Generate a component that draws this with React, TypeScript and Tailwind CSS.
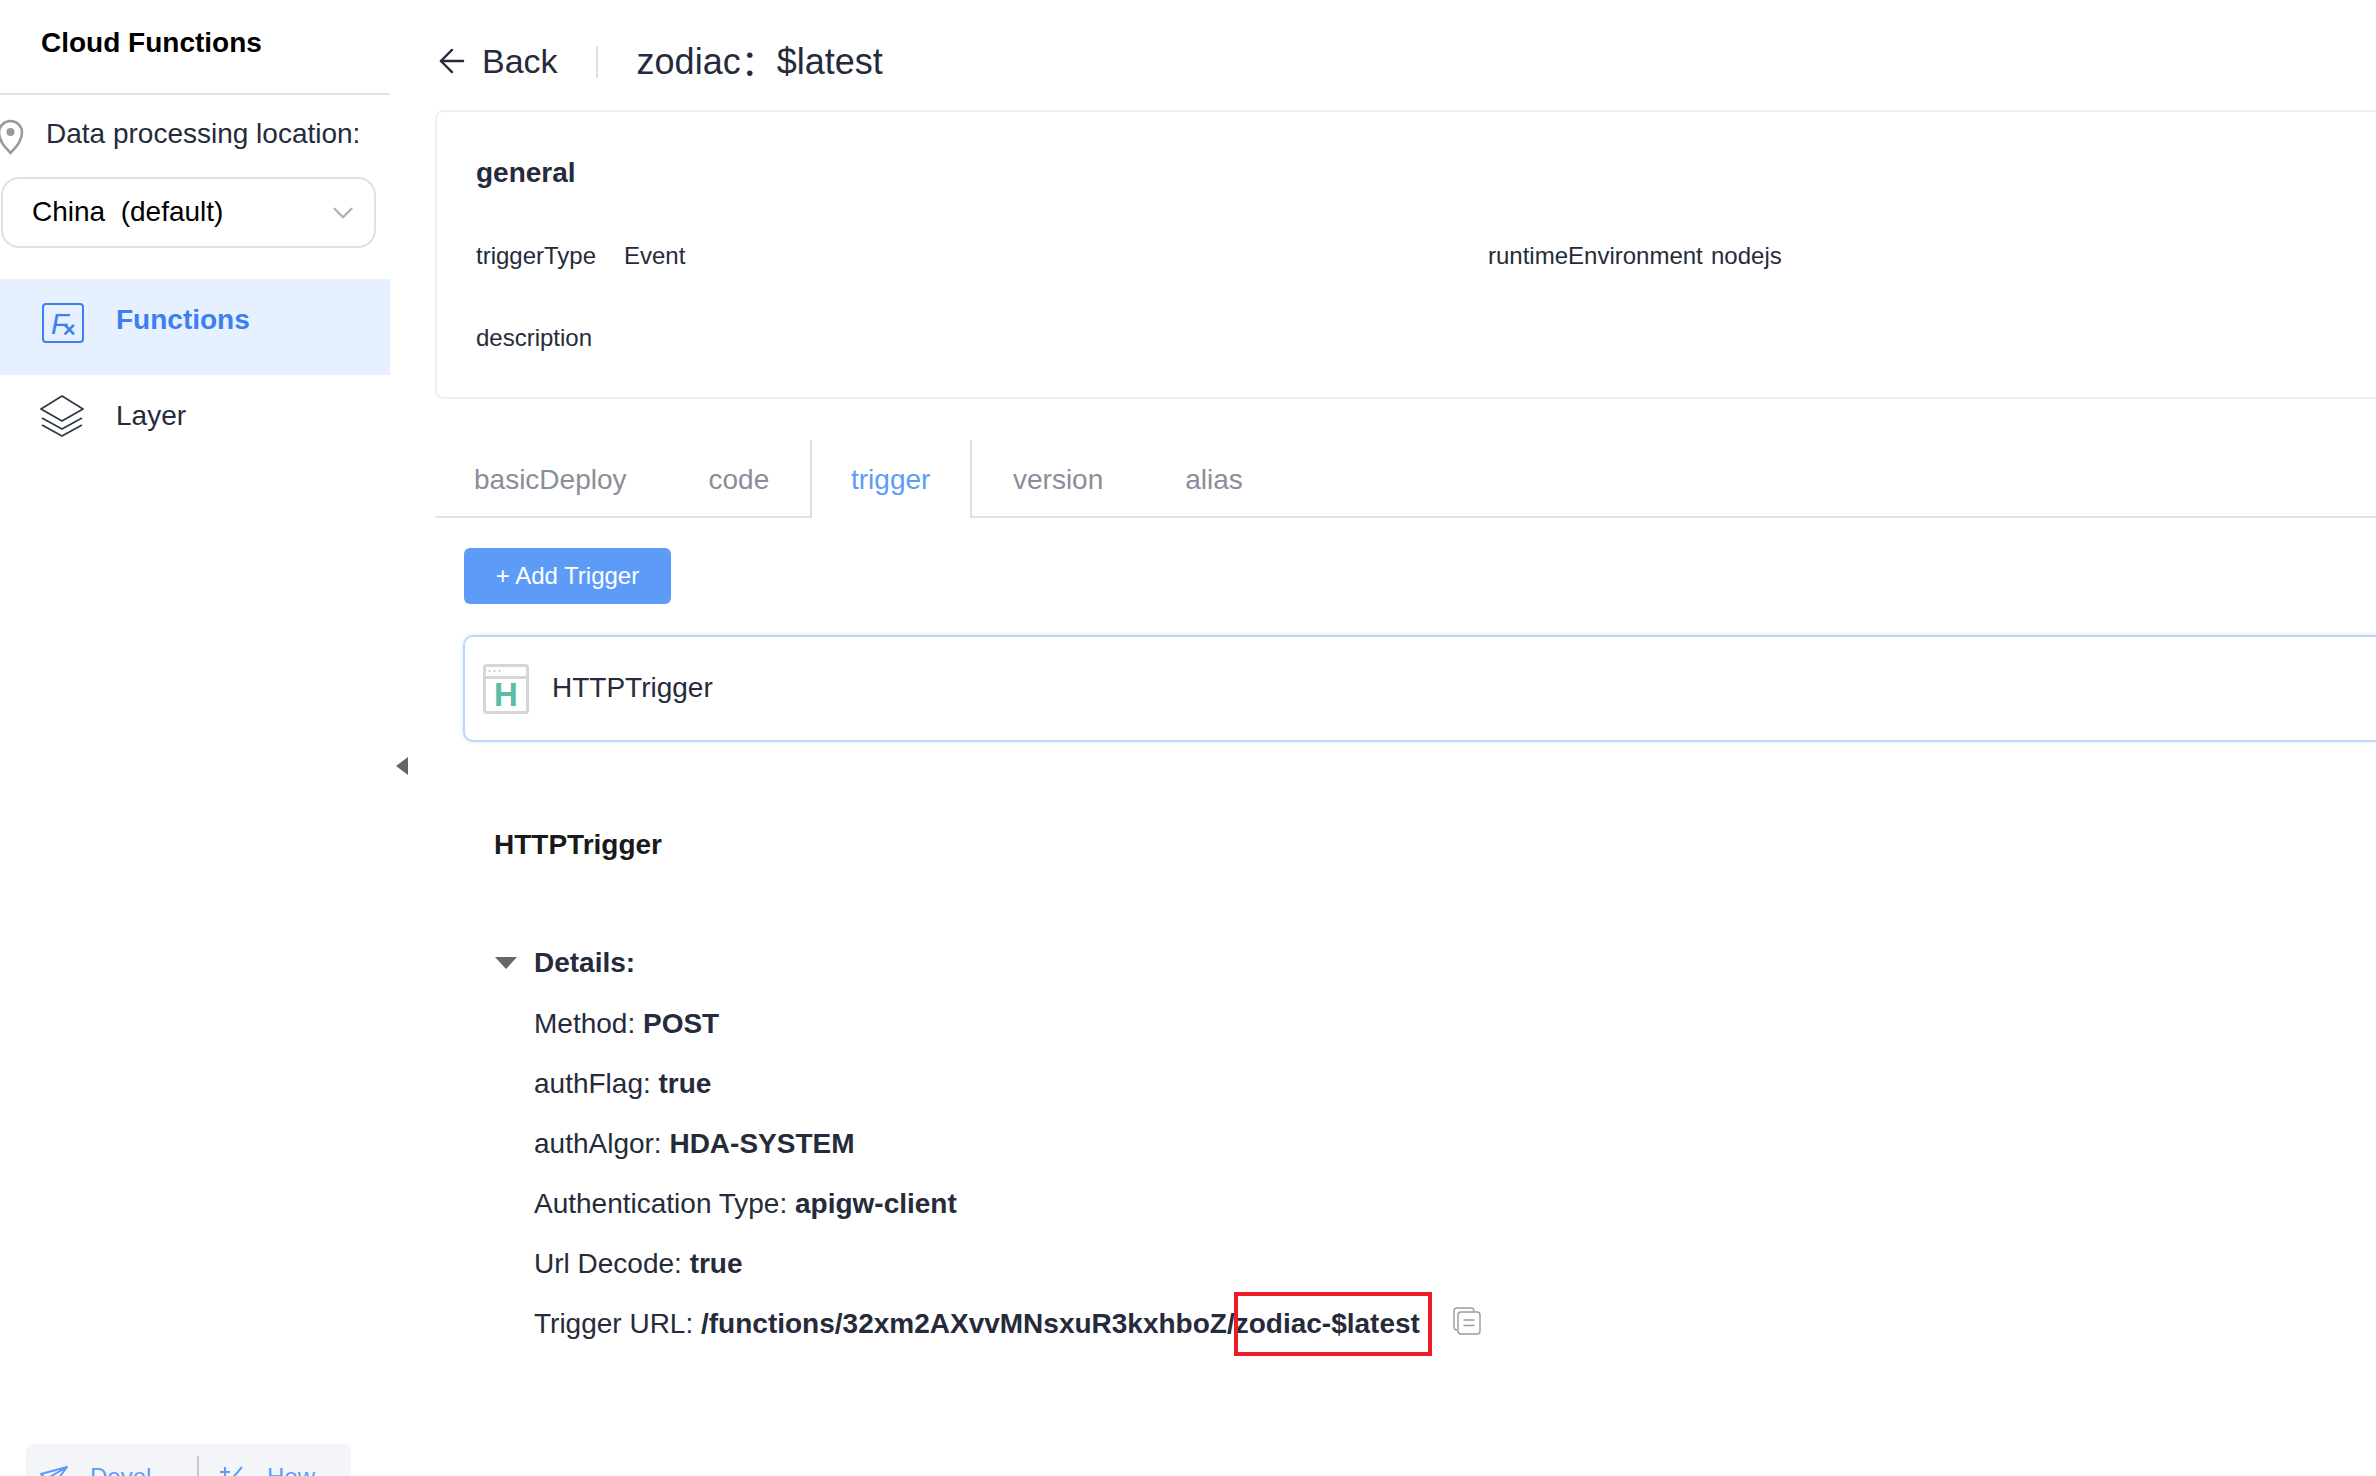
import { ArrowLeft, ChevronDown } from 'lucide-react'

const details = [
  { label: 'Method:', value: 'POST' },
  { label: 'authFlag:', value: 'true' },
  { label: 'authAlgor:', value: 'HDA-SYSTEM' },
  { label: 'Authentication Type:', value: 'apigw-client' },
  { label: 'Url Decode:', value: 'true' },
]

function PinIcon() {
  return (
    <svg width="27" height="36" viewBox="0 0 27 36" className="-ml-[3px] mt-[5px] shrink-0" fill="none">
      <path d="M13.5 34 C8 28 2 22 2 13.5 A11.5 11.5 0 0 1 25 13.5 C25 22 19 28 13.5 34 Z" stroke="#999" strokeWidth="2.6" strokeLinejoin="round" />
      <circle cx="13.5" cy="13" r="4" fill="#999" />
    </svg>
  )
}

function FxIcon() {
  return (
    <svg width="42" height="40" viewBox="0 0 42 40" fill="none" className="shrink-0">
      <rect x="1" y="1" width="40" height="38" rx="3" stroke="#3b7ff0" strokeWidth="2" />
      <text x="9" y="31" fontFamily="Liberation Sans" fontStyle="italic" fontSize="29" fill="#3b7ff0">
        F
        <tspan dx="-6" dy="3" fontStyle="normal" fontWeight="700" fontSize="22">×</tspan>
      </text>
    </svg>
  )
}

function LayerIcon() {
  return (
    <svg width="44" height="44" viewBox="0 0 44 44" fill="none" stroke="#333a47" strokeWidth="1.8" strokeLinejoin="round" className="shrink-0">
      <path d="M22 2 L43 15 L22 27 L1 15 Z" />
      <path d="M2 24 L22 35 L42 24" />
      <path d="M2 31 L22 42 L42 31" />
    </svg>
  )
}

function TriggerIcon() {
  return (
    <svg width="46" height="50" viewBox="0 0 46 50" fill="none" className="shrink-0">
      <rect x="1.5" y="1.5" width="43" height="47" rx="2" stroke="#d6d6d6" strokeWidth="3" />
      <path d="M2 13.5 H44" stroke="#d6d6d6" strokeWidth="3" />
      <circle cx="6.5" cy="7" r="1" fill="#c4c4c4" />
      <circle cx="11.5" cy="7" r="1" fill="#c4c4c4" />
      <circle cx="16.5" cy="7" r="1" fill="#c4c4c4" />
      <text x="23" y="42" textAnchor="middle" fontFamily="Liberation Sans" fontWeight="700" fontSize="33" fill="#5bbba5">H</text>
    </svg>
  )
}

function CopyIcon() {
  return (
    <svg width="28" height="28" viewBox="0 0 28 28" fill="none" stroke="#9a9a9a" strokeWidth="1.4" className="shrink-0">
      <path d="M4 23 C2 23 1 22 1 20 V4 C1 2 2 1 4 1 H18 C20 1 21 2 21 4" />
      <rect x="5" y="5" width="22" height="22" rx="3" fill="#fff" />
      <path d="M10.5 13 H21.5 M10.5 18.5 H21.5" />
    </svg>
  )
}

export default function App() {
  return (
    <div className="w-[2376px] h-[1476px] overflow-hidden flex bg-white font-['Liberation_Sans',sans-serif] text-[#252b3a]">
      {/* Left nav */}
      <aside className="w-[390px] shrink-0 flex flex-col overflow-hidden">
        <div className="h-[95px] border-b-2 border-[#e2e2e4] pl-[41px] pt-[25px]">
          <span className="block text-[28px] leading-[36px] font-bold text-black">Cloud Functions</span>
        </div>
        <div className="h-[40px] mt-[19px] flex items-center gap-[22px]">
          <PinIcon />
          <span className="text-[28px] leading-[40px]">Data processing location:</span>
        </div>
        <div className="mt-[23px] ml-[1px] w-[375px] h-[71px] border-2 border-[#e0e0e6] rounded-[18px] flex items-center justify-between pl-[29px] pr-[14px]">
          <span className="text-[28px] whitespace-pre text-black -mt-[2px]">China  (default)</span>
          <ChevronDown size={34} strokeWidth={1.6} color="#b0b0b4" />
        </div>
        <div className="mt-[31px] h-[96px] bg-[#e6f0fe] flex pl-[42px] pt-[24px] gap-[32px]">
          <FxIcon />
          <span className="text-[28px] leading-[34px] font-bold text-[#3b7ff0]">Functions</span>
        </div>
        <div className="h-[80px] flex items-center pl-[40px] gap-[32px] pt-[2px]">
          <LayerIcon />
          <span className="text-[28px] leading-[34px] -mt-[1px]">Layer</span>
        </div>
        <div className="mt-auto -mb-[30px] ml-[26px] w-[325px] h-[62px] bg-[#f3f5f8] rounded-[8px] flex items-start pt-[12px] text-[24px] leading-[34px] text-[#5c9cf8]">
          <div className="w-[171px] flex items-start pl-[14px] gap-[22px] pt-[10px]">
            <svg width="28" height="24" viewBox="0 0 28 24" fill="none" stroke="#5c9cf8" strokeWidth="2" className="shrink-0">
              <path d="M1 8 L27 1 L13 20 Z M27 1 L8 12" strokeLinejoin="round" />
            </svg>
            <span className="-mt-[6px]">Devel</span>
          </div>
          <div className="w-[2px] h-[40px] bg-[#c8c8c8] shrink-0" />
          <div className="flex items-start pl-[20px] gap-[24px] pt-[10px]">
            <svg width="24" height="24" viewBox="0 0 24 24" fill="none" stroke="#5c9cf8" strokeWidth="2" className="shrink-0">
              <path d="M1 6 H11 M6 1 V11 M23 1 L12 14" />
            </svg>
            <span className="-mt-[6px]">How</span>
          </div>
        </div>
      </aside>

      {/* Collapse handle */}
      <div className="w-[45px] shrink-0 flex pl-[6px] pt-[757px]">
        <div className="w-0 h-0 border-y-[9px] border-y-transparent border-r-[12px] border-r-[#666]" />
      </div>

      {/* Content */}
      <main className="flex-1 min-w-0 -mr-[20px]">
        <div className="h-[110px] flex items-start pt-[41px]">
          <ArrowLeft size={38} strokeWidth={1.5} className="ml-[-2px] mt-[1px] shrink-0" />
          <span className="ml-[11px] text-[34px] leading-[40px]">Back</span>
          <div className="ml-[38px] mt-[5px] w-[2px] h-[32px] bg-[#e2e2e4]" />
          <span className="ml-[39px] mt-[1px] text-[36px] leading-[40px]">zodiac</span>
          <span className="-mt-[1px] text-[36px] leading-[40px] font-['Noto_Sans_CJK_SC',sans-serif]">：</span>
          <span className="mt-[1px] text-[36px] leading-[40px]">$latest</span>
        </div>

        <div className="h-[289px] border-2 border-[#eef0f4] rounded-[8px] pl-[39px] pt-[43px]">
          <div className="text-[28px] leading-[36px] font-bold">general</div>
          <div className="mt-[48px] flex text-[24px] leading-[34px]">
            <span className="w-[148px]">triggerType</span>
            <span className="w-[864px]">Event</span>
            <span className="w-[223px]">runtimeEnvironment</span>
            <span>nodejs</span>
          </div>
          <div className="mt-[48px] text-[24px] leading-[34px]">description</div>
        </div>

        <div className="mt-[41px] h-[78px] flex text-[28px] leading-[34px] text-[#8a8e99]">
          <div className="flex border-b-2 border-[#e2e2e6] pt-[23px] pl-[39px] pr-[41px] gap-[82px] w-[375px]">
            <span>basicDeploy</span>
            <span>code</span>
          </div>
          <div className="w-[162px] border-x-2 border-[#dfdfe3] pt-[23px] pl-[39px] text-[#5c9cf8]">trigger</div>
          <div className="flex-1 flex border-b-2 border-[#e2e2e6] pt-[23px] pl-[41px] gap-[82px]">
            <span>version</span>
            <span>alias</span>
          </div>
        </div>

        <div className="pl-[29px]">
          <button className="mt-[30px] w-[207px] h-[56px] bg-[#5c9cf8] rounded-[6px] text-white text-[24px] block">+ Add Trigger</button>
          <div className="mt-[31px] -ml-[1px] h-[107px] border-2 border-[#bcd7fa] rounded-[10px] shadow-[0_0_4px_#d6e6fc] flex items-center pl-[18px] gap-[23px]">
            <TriggerIcon />
            <span className="text-[28px] leading-[34px] -mt-[2px]">HTTPTrigger</span>
          </div>

          <div className="ml-[30px] mt-[86px] text-[28px] leading-[34px] font-bold text-[#1a1a1a]">HTTPTrigger</div>

          <div className="ml-[31px] mt-[84px] flex items-center gap-[17px] text-[28px] leading-[34px]">
            <div className="w-0 h-0 border-x-[11px] border-x-transparent border-t-[12px] border-t-[#666]" />
            <span className="font-bold">Details:</span>
          </div>
          <div className="ml-[70px] mt-[27px] flex flex-col gap-[26px] text-[28px] leading-[34px]">
            {details.map((d) => (
              <div key={d.label}>
                {d.label} <b>{d.value}</b>
              </div>
            ))}
            <div className="flex items-center">
              <span>Trigger URL:&nbsp;</span>
              <b>/functions/32xm2AXvvMNsxuR3kxhboZ/</b>
              <b className="relative">
                zodiac-$latest
                <span className="absolute -left-[1px] -right-[12px] -top-[15px] -bottom-[15px] border-[4px] border-[#ee1c25]" />
              </b>
              <span className="ml-[33px] -mt-[6px]"><CopyIcon /></span>
            </div>
          </div>
        </div>
      </main>
    </div>
  )
}
